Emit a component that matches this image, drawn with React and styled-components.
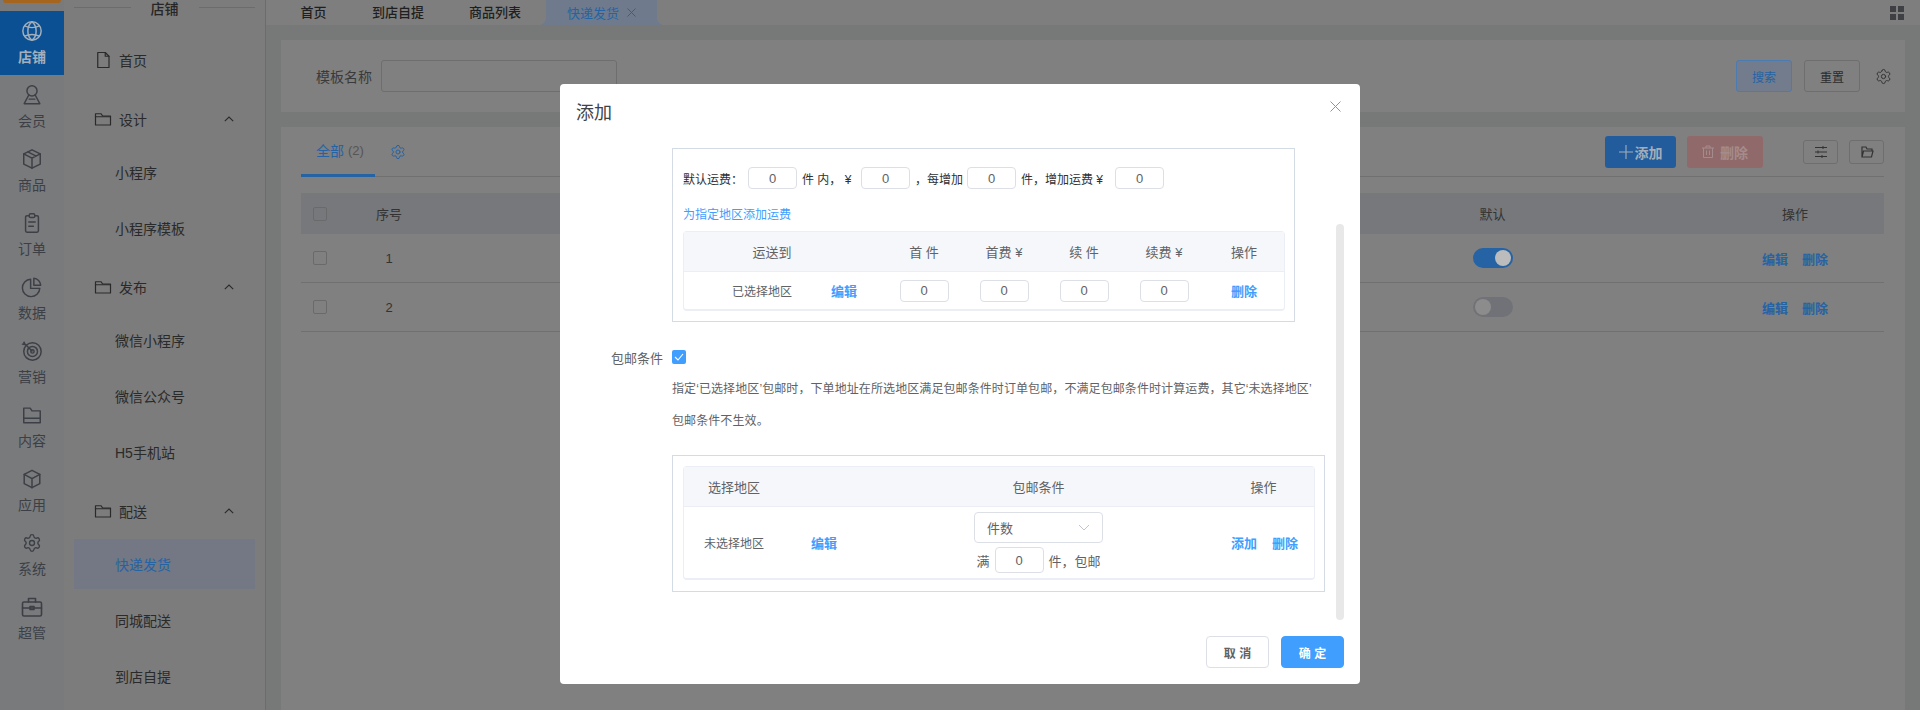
import React from 'react';
import styled, { createGlobalStyle } from 'styled-components';
import { Settings } from 'lucide-react';

const Global = createGlobalStyle`
	html, body { margin: 0; padding: 0; height: 100%; }
	body { font-family: "Liberation Sans", "Noto Sans CJK SC", sans-serif; overflow: hidden; background: #767978; }
	* { box-sizing: border-box; }
`;

// everything behind the dialog is dimmed, so the colours below are the dimmed ones
const dim = {
	text: '#2a2a2a',
	blue: '#2563a5',
	tabBg: '#6f7b8c',
};

const Ic = ({ size = 20, sw = 1.6, children }) => (
	<svg width={size} height={size} viewBox="0 0 24 24" fill="none" stroke="currentColor" strokeWidth={sw} strokeLinecap="round" strokeLinejoin="round">
		{children}
	</svg>
);

const GlobeIcon = () => (
	<Ic size={22}>
		<circle cx="12" cy="12" r="10" />
		<path d="M12 2c-3 2-4.500 5.500-4.500 10s1.500 8 4.500 10c3-2 4.500-5.500 4.500-10S15 4 12 2z" />
		<path d="M4 6.500c2.500 1.200 5 1.800 8 1.800s5.500-.6 8-1.800M4 17.500c2.500-1.200 5-1.800 8-1.800s5.500.6 8 1.800" />
	</Ic>
);
const UserIcon = () => (
	<Ic size={22}>
		<circle cx="12" cy="7.500" r="5.500" />
		<path d="M8.500 12 3.500 21.500h17L15.500 12" />
		<path d="M9 16.500h6" />
	</Ic>
);
const BoxIcon = () => (
	<Ic size={22}>
		<path d="M12 2 21 6.500v11L12 22l-9-4.500v-11z" />
		<path d="M3 6.500 12 11l9-4.500M12 11v11M7.500 4.300l9 4.500" />
	</Ic>
);
const CubeIcon = () => (
	<Ic size={22}>
		<path d="M12 2.500 20.500 7v10L12 21.500 3.500 17V7z" />
		<path d="M3.500 7 12 11.500 20.500 7M12 11.500v10" />
	</Ic>
);
const OrderIcon = () => (
	<Ic size={22}>
		<path d="M9 4H6.500A1.500 1.500 0 0 0 5 5.500v15A1.500 1.500 0 0 0 6.500 22h11a1.500 1.500 0 0 0 1.500-1.500v-15A1.500 1.500 0 0 0 17.500 4H15" />
		<rect x="9" y="2" width="6" height="4" rx="1.500" />
		<path d="M8.500 11h7M8.500 15.500h5" />
	</Ic>
);
const PieIcon = () => (
	<Ic size={22}>
		<path d="M10.500 3.500a9.500 9.500 0 1 0 10 10h-10z" />
		<path d="M14 2.500a8 8 0 0 1 7.500 7.500H14z" />
	</Ic>
);
const AimIcon = () => (
	<Ic size={22}>
		<circle cx="12.500" cy="12.500" r="9.500" />
		<circle cx="12.500" cy="12.500" r="5.500" />
		<circle cx="12.500" cy="12.500" r="1.800" />
		<path d="M12 12 3 3M1.500 4.500 4 5l-.5-2.500" />
	</Ic>
);
const FolderIcon = () => (
	<Ic size={22}>
		<path d="M3 4.500h7l2 3h9v13H3z" />
		<path d="M3 15.500h18" />
	</Ic>
);
const GroupFolder = () => (
	<Ic size={18} sw={1.6}>
		<path d="M2 5h7.500l2 3H22v12H2z" />
		<path d="M2 9h20" />
	</Ic>
);
const CaseIcon = () => (
	<Ic size={24}>
		<rect x="2.500" y="7" width="19" height="14" rx="1.500" />
		<path d="M8.500 7V3.500h7V7M2.500 13h19" />
		<rect x="10" y="11.500" width="4" height="3" />
	</Ic>
);
const PageIcon = () => (
	<Ic size={18} sw={1.6}>
		<path d="M5 2h10l5 5v15H5z" />
		<path d="M15 2v5h5" />
	</Ic>
);
const Chevron = () => (
	<svg width="10" height="6" viewBox="0 0 10 6" fill="none" stroke="currentColor" strokeWidth="1.100">
		<path d="M.8 5.200 5 1l4.200 4.200" />
	</svg>
);

const railItems = [
	{ label: '店铺', icon: <GlobeIcon />, active: true },
	{ label: '会员', icon: <UserIcon /> },
	{ label: '商品', icon: <BoxIcon /> },
	{ label: '订单', icon: <OrderIcon /> },
	{ label: '数据', icon: <PieIcon /> },
	{ label: '营销', icon: <AimIcon /> },
	{ label: '内容', icon: <FolderIcon /> },
	{ label: '应用', icon: <CubeIcon /> },
	{ label: '系统', icon: <Settings size={20} strokeWidth={1.6} /> },
	{ label: '超管', icon: <CaseIcon /> },
];

const menu = [
	{ title: '设计', subs: ['小程序', '小程序模板'] },
	{ title: '发布', subs: ['微信小程序', '微信公众号', 'H5手机站'] },
	{ title: '配送', subs: ['快递发货', '同城配送', '到店自提'], activeSub: '快递发货' },
];

const rows = [
	{ id: 1, on: true },
	{ id: 2, on: false },
];

export default function App() {
	return (
		<Page>
			<Global />
			<Rail>
				<Logo />
				{railItems.map(item => (
					<RailItem key={item.label} $active={item.active}>
						<RailIcon>{item.icon}</RailIcon>
						<span>{item.label}</span>
					</RailItem>
				))}
			</Rail>
			<Side>
				<SideTitle>
					<i />
					<span>店铺</span>
					<i />
				</SideTitle>
				<HomeItem>
					<PageIcon />
					<span>首页</span>
				</HomeItem>
				{menu.map(group => (
					<div key={group.title}>
						<GroupHead>
							<GroupFolder />
							<span>{group.title}</span>
							<ChevronBox>
								<Chevron />
							</ChevronBox>
						</GroupHead>
						{group.subs.map(sub => (
							<SubItem key={sub} $active={sub === group.activeSub}>
								{sub}
							</SubItem>
						))}
					</div>
				))}
			</Side>
			<Main>
				<TopBar>
					<TopTab $w={71}>首页</TopTab>
					<TopTab $w={98}>到店自提</TopTab>
					<TopTab $w={96}>商品列表</TopTab>
					<ActiveTab>
						快递发货
						<TabClose>
							<svg width="9" height="9" viewBox="0 0 9 9" stroke="currentColor" strokeWidth="1">
								<path d="M.5.500l8 8M8.500.500l-8 8" />
							</svg>
						</TabClose>
					</ActiveTab>
					<GridIcon>
						<b />
						<b />
						<b />
						<b />
					</GridIcon>
				</TopBar>
				<Content>
					<SearchCard>
						<SearchLabel>模板名称</SearchLabel>
						<SearchInput />
						<SearchActions>
							<OutlineBtn $primary>搜索</OutlineBtn>
							<OutlineBtn>重置</OutlineBtn>
							<GearBox>
								<Settings size={17} strokeWidth={1.4} />
							</GearBox>
						</SearchActions>
					</SearchCard>
					<ListCard>
						<ListHead>
							<AllTab>
								全部 <em>(2)</em>
							</AllTab>
							<HeadGear>
								<Settings size={16} strokeWidth={1.5} />
							</HeadGear>
							<HeadActions>
								<AddBtn>
									<svg width="14" height="14" viewBox="0 0 14 14" stroke="currentColor" strokeWidth="1.100">
										<path d="M7 0v14M0 7h14" />
									</svg>
									添加
								</AddBtn>
								<DelBtn>
									<svg width="12" height="13" viewBox="0 0 12 13" fill="none" stroke="currentColor">
										<path d="M1.500 3v9.500h9V3M0 3h12M4 3V1h4v2M4.500 5.500v4.500M7.500 5.500v4.500" />
									</svg>
									删除
								</DelBtn>
								<ToolBtn $first>
									<svg width="14" height="14" viewBox="0 0 14 14" fill="none" stroke="currentColor">
										<path d="M1 2.500h12M1 7h12M1 11.500h12M9 1v3M4 5.500v3M8 10v3" />
									</svg>
								</ToolBtn>
								<ToolBtn>
									<svg width="14" height="14" viewBox="0 0 14 14" fill="none" stroke="currentColor" strokeWidth="1.200">
										<path d="M2 12V2h4l1 2h5v2M2 12l1.500-6H13l-1.500 6z" />
									</svg>
								</ToolBtn>
							</HeadActions>
						</ListHead>
						<TableHead>
							<CheckCell>
								<Check />
							</CheckCell>
							<span>序号</span>
							<span />
							<span>默认</span>
							<span />
							<span>操作</span>
						</TableHead>
						{rows.map(row => (
							<TableRow key={row.id}>
								<CheckCell>
									<Check />
								</CheckCell>
								<span>{row.id}</span>
								<span />
								<Toggle $on={row.on} />
								<span />
								<RowActions>
									<a>编辑</a>
									<a>删除</a>
								</RowActions>
							</TableRow>
						))}
					</ListCard>
				</Content>
			</Main>

			<Dialog>
				<DialogHead>
					<DialogTitle>添加</DialogTitle>
					<CloseBtn>
						<svg width="11" height="11" viewBox="0 0 11 11" stroke="currentColor" strokeWidth="1">
							<path d="M.5.500l10 10M10.500.500l-10 10" />
						</svg>
					</CloseBtn>
				</DialogHead>
				<DialogBody>
					<FeeBox>
						<FeeRow>
							<span>默认运费：</span>
							<Num>0</Num>
							<FeeText $w={54}>件 内， ¥</FeeText>
							<Num>0</Num>
							<FeeText $w={47}>，每增加</FeeText>
							<Num>0</Num>
							<FeeText $w={89}>件，增加运费 ¥</FeeText>
							<Num>0</Num>
						</FeeRow>
						<AddLink>为指定地区添加运费</AddLink>
						<FeeTable>
							<FeeHead>
								<FeeHeadFirst>运送到</FeeHeadFirst>
								<span>首 件</span>
								<span>首费 ¥</span>
								<span>续 件</span>
								<span>续费 ¥</span>
								<span>操作</span>
							</FeeHead>
							<FeeCells>
								<RegionCell>已选择地区</RegionCell>
								<DialogLink>编辑</DialogLink>
								<Num>0</Num>
								<Num>0</Num>
								<Num>0</Num>
								<Num>0</Num>
								<DialogLink>删除</DialogLink>
							</FeeCells>
						</FeeTable>
					</FeeBox>
					<FreeRow>
						<FreeLabel>包邮条件</FreeLabel>
						<CheckedBox>
							<svg width="10" height="8" viewBox="0 0 10 8" fill="none" stroke="#fff" strokeWidth="1.100">
								<path d="M1 4l3 3 5-6" />
							</svg>
						</CheckedBox>
					</FreeRow>
					<Note>
						指定‘已选择地区’包邮时，下单地址在所选地区满足包邮条件时订单包邮，不满足包邮条件时计算运费，其它‘未选择地区’
						<br />
						包邮条件不生效。
					</Note>
					<FreeBox>
						<FreeTable>
							<FreeHead>
								<FreeHeadFirst2>选择地区</FreeHeadFirst2>
								<span>包邮条件</span>
								<span>操作</span>
							</FreeHead>
							<FreeCells>
								<FreeRegion>
									<RegionName>未选择地区</RegionName>
									<DialogLink>编辑</DialogLink>
								</FreeRegion>
								<Condition>
									<Select>
										件数
										<svg width="12" height="7" viewBox="0 0 12 7" fill="none" stroke="#c0c4cc" strokeWidth="1">
											<path d="M1 1l5 5 5-5" />
										</svg>
									</Select>
									<ConditionLine>
										<span>满</span>
										<Num $tall>0</Num>
										<span>件，包邮</span>
									</ConditionLine>
								</Condition>
								<FreeOps>
									<DialogLink>添加</DialogLink>
									<DialogLink>删除</DialogLink>
								</FreeOps>
							</FreeCells>
						</FreeTable>
					</FreeBox>
					<ScrollThumb />
				</DialogBody>
				<DialogFoot>
					<CancelBtn>取 消</CancelBtn>
					<OkBtn>确 定</OkBtn>
				</DialogFoot>
			</Dialog>
		</Page>
	);
}

const Page = styled.div`
	display: flex;
	width: 1920px;
	height: 710px;
	overflow: hidden;
	position: relative;
`;

const Rail = styled.div`
	width: 64px;
	flex: none;
	background: #797a7b;
`;

const Logo = styled.div`
	height: 3px;
	margin: 0 3px 8px;
	background: #a5651f;
	border-radius: 0 0 10px 10px;
`;

const RailItem = styled.div`
	height: 64px;
	padding-top: 9px;
	display: flex;
	flex-direction: column;
	align-items: center;
	font-size: 14px;
	line-height: 20px;
	font-weight: ${p => (p.$active ? 700 : 400)};
	background: ${p => (p.$active ? '#0b5092' : 'transparent')};
	color: ${p => (p.$active ? '#a3afbc' : '#3c3f46')};
`;

const RailIcon = styled.div`
	height: 22px;
	margin-bottom: 5px;
	display: flex;
	align-items: center;
	justify-content: center;
	font-weight: 400;
`;

const Side = styled.div`
	width: 202px;
	flex: none;
	padding: 0 10px;
	background: #7c7c7c;
	border-right: 1px solid #6c6c6c;
	color: ${dim.text};
	font-size: 14px;
`;

const SideTitle = styled.div`
	display: flex;
	align-items: center;
	height: 15px;
	font-weight: 500;
	color: #262626;
	i {
		flex: 1;
		height: 1px;
		background: #6c6c6c;
	}
	span {
		width: 68px;
		text-align: center;
	}
`;

const HomeItem = styled.div`
	height: 56px;
	margin: 17px 0 3px;
	padding-left: 20px;
	display: flex;
	align-items: center;
	gap: 7px;
`;

const GroupHead = styled.div`
	height: 56px;
	padding-left: 20px;
	display: flex;
	align-items: center;
	gap: 7px;
`;

const ChevronBox = styled.div`
	margin-left: auto;
	margin-right: 21px;
	display: flex;
`;

const SubItem = styled.div`
	height: 50px;
	margin-bottom: 6px;
	padding-left: 41px;
	display: flex;
	align-items: center;
	background: ${p => (p.$active ? '#737884' : 'transparent')};
	color: ${p => (p.$active ? dim.blue : dim.text)};
`;

const Main = styled.div`
	flex: 1;
	min-width: 0;
	background: #767978;
`;

const TopBar = styled.div`
	height: 25px;
	background: #7e7e7e;
	display: flex;
	align-items: center;
	padding-left: 12px;
	font-size: 13px;
	font-weight: 500;
	color: #1f1f1f;
`;

const TopTab = styled.div`
	width: ${p => p.$w}px;
	text-align: center;
	line-height: 25px;
`;

const ActiveTab = styled.div`
	position: relative;
	margin-left: 3px;
	width: 111px;
	height: 25px;
	padding-left: 21px;
	background: ${dim.tabBg};
	color: ${dim.blue};
	display: flex;
	align-items: center;
	font-weight: 400;
	&::before,
	&::after {
		content: '';
		position: absolute;
		bottom: 0;
		width: 8px;
		height: 8px;
	}
	&::before {
		left: -8px;
		background: radial-gradient(circle at 0 0, transparent 8px, ${dim.tabBg} 8px);
	}
	&::after {
		right: -8px;
		background: radial-gradient(circle at 100% 0, transparent 8px, ${dim.tabBg} 8px);
	}
`;

const TabClose = styled.span`
	margin-left: 8px;
	display: flex;
`;

const GridIcon = styled.div`
	margin-left: auto;
	margin-right: 16px;
	display: grid;
	grid-template-columns: 6px 6px;
	gap: 2px;
	b {
		display: block;
		height: 6px;
		background: #3f4043;
	}
`;

const Content = styled.div`
	padding: 15px 15px 0;
`;

const SearchCard = styled.div`
	height: 72px;
	background: #808080;
	display: flex;
	align-items: center;
	padding: 0 13px 0 35px;
	font-size: 14px;
`;

const SearchLabel = styled.div`
	width: 65px;
	color: #3a3a3a;
`;

const SearchInput = styled.div`
	width: 236px;
	height: 32px;
	border: 1px solid #6e6e6e;
	border-radius: 3px;
`;

const SearchActions = styled.div`
	margin-left: auto;
	display: flex;
	align-items: center;
	gap: 12px;
`;

const OutlineBtn = styled.div`
	width: 56px;
	height: 32px;
	border-radius: 3px;
	font-size: 12px;
	display: flex;
	align-items: center;
	justify-content: center;
	border: 1px solid ${p => (p.$primary ? '#4b7bb0' : '#6e6e6e')};
	background: ${p => (p.$primary ? '#727c8c' : 'transparent')};
	color: ${p => (p.$primary ? dim.blue : '#2c2c2c')};
`;

const GearBox = styled.div`
	margin-left: 3px;
	display: flex;
	color: #333;
`;

const ListCard = styled.div`
	margin-top: 15px;
	height: 600px;
	padding: 0 21px 0 20px;
	background: #808080;
	font-size: 13px;
	color: #333;
`;

const ListHead = styled.div`
	height: 50px;
	display: flex;
	align-items: center;
	border-bottom: 1px solid #707070;
`;

const AllTab = styled.div`
	width: 74px;
	height: 50px;
	padding-left: 15px;
	display: flex;
	align-items: center;
	gap: 4px;
	font-size: 14px;
	color: ${dim.blue};
	border-bottom: 3px solid ${dim.blue};
	em {
		font-style: normal;
		font-size: 13px;
		color: #555;
	}
`;

const HeadGear = styled.div`
	margin-left: 15px;
	display: flex;
	color: ${dim.blue};
`;

const HeadActions = styled.div`
	margin-left: auto;
	display: flex;
	align-items: center;
	gap: 11px;
`;

const AddBtn = styled.div`
	width: 71px;
	height: 32px;
	border-radius: 3px;
	background: #225c9d;
	color: #a3adb9;
	font-size: 14px;
	font-weight: 700;
	display: flex;
	align-items: center;
	justify-content: center;
	gap: 2px;
`;

const DelBtn = styled.div`
	width: 76px;
	height: 32px;
	border-radius: 3px;
	background: #906a6a;
	color: #a58c8c;
	font-size: 14px;
	font-weight: 700;
	display: flex;
	align-items: center;
	justify-content: center;
	gap: 6px;
`;

const ToolBtn = styled.div`
	width: 35px;
	height: 24px;
	margin-left: ${p => (p.$first ? '29px' : '0')};
	border: 1px solid #6e6e6e;
	border-radius: 3px;
	display: flex;
	align-items: center;
	justify-content: center;
	color: #333;
`;

const columns = '40px 96px 1fr 121px 153px 178px';

const TableHead = styled.div`
	margin-top: 16px;
	height: 41px;
	display: grid;
	grid-template-columns: ${columns};
	align-items: center;
	justify-items: center;
	background: #76787b;
`;

const TableRow = styled.div`
	height: 49px;
	display: grid;
	grid-template-columns: ${columns};
	align-items: center;
	justify-items: center;
	border-bottom: 1px solid #707070;
`;

const CheckCell = styled.div`
	justify-self: start;
	padding-left: 12px;
	display: flex;
`;

const Check = styled.div`
	width: 14px;
	height: 14px;
	border: 1px solid #6a6a6a;
	border-radius: 2px;
`;

const Toggle = styled.div`
	position: relative;
	width: 40px;
	height: 20px;
	border-radius: 10px;
	background: ${p => (p.$on ? '#2563a5' : '#707277')};
	&::after {
		content: '';
		position: absolute;
		top: 2px;
		left: ${p => (p.$on ? '22px' : '2px')};
		width: 16px;
		height: 16px;
		border-radius: 50%;
		background: ${p => (p.$on ? '#bcbcbc' : '#8c8c8c')};
	}
`;

const RowActions = styled.div`
	display: flex;
	gap: 14px;
	font-weight: 700;
	color: ${dim.blue};
`;

const Dialog = styled.div`
	position: absolute;
	left: 560px;
	top: 84px;
	width: 800px;
	height: 600px;
	background: #fff;
	border-radius: 4px;
	display: flex;
	flex-direction: column;
	font-size: 12px;
	color: #606266;
`;

const DialogHead = styled.div`
	height: 56px;
	padding: 0 0 2px 16px;
	display: flex;
	align-items: center;
	flex: none;
`;

const DialogTitle = styled.div`
	font-size: 18px;
	color: #404246;
`;

const CloseBtn = styled.div`
	margin-left: auto;
	margin-right: 19px;
	margin-top: -9px;
	display: flex;
	color: #909399;
`;

const DialogBody = styled.div`
	position: relative;
	flex: 1;
	min-height: 0;
	overflow: hidden;
	padding: 8px 0 0 112px;
`;

const FeeBox = styled.div`
	width: 623px;
	height: 174px;
	border: 1px solid #d5dbe5;
	padding: 18px 10px 0;
`;

const FeeRow = styled.div`
	display: flex;
	align-items: center;
	height: 22px;
	gap: 5px;
	color: #303133;
`;

const FeeText = styled.span`
	width: ${p => p.$w}px;
	white-space: nowrap;
`;

const Num = styled.span`
	display: inline-flex;
	align-items: center;
	justify-content: center;
	width: 49px;
	height: ${p => (p.$tall ? '26px' : '22px')};
	border: 1px solid #dcdfe6;
	border-radius: 4px;
	font-size: 13px;
	color: #606266;
	background: #fff;
`;

const AddLink = styled.div`
	margin-top: 16px;
	height: 20px;
	line-height: 20px;
	color: #409eff;
`;

const FeeTable = styled.div`
	margin-top: 6px;
	width: 602px;
	border: 1px solid #ebeef5;
	border-bottom-width: 2px;
	border-radius: 4px;
`;

const FeeHead = styled.div`
	height: 40px;
	display: grid;
	grid-template-columns: 200px repeat(5, 80px);
	align-items: center;
	justify-items: center;
	background: #f5f7fa;
	border-bottom: 1px solid #ebeef5;
	font-size: 13px;
	color: #606266;
`;

const FeeHeadFirst = styled.span`
	padding-right: 24px;
`;

const FeeCells = styled.div`
	height: 37px;
	display: grid;
	grid-template-columns: 120px 80px repeat(5, 80px);
	align-items: center;
	justify-items: center;
`;

const RegionCell = styled.span`
	justify-self: end;
	padding-right: 12px;
`;

const DialogLink = styled.span`
	color: #409eff;
	font-size: 13px;
	font-weight: 700;
`;

const FreeRow = styled.div`
	margin: 28px 0 0 -61px;
	display: flex;
	align-items: center;
	height: 14px;
	gap: 9px;
	font-size: 13px;
`;

const FreeLabel = styled.span`
	width: 52px;
	white-space: nowrap;
`;

const CheckedBox = styled.span`
	width: 14px;
	height: 14px;
	border-radius: 2px;
	background: #409eff;
	display: flex;
	align-items: center;
	justify-content: center;
`;

const Note = styled.div`
	margin-top: 9px;
	line-height: 32px;
	white-space: nowrap;
	letter-spacing: 0.09px;
`;

const FreeBox = styled.div`
	margin-top: 18px;
	width: 653px;
	height: 137px;
	padding: 10px;
	border: 1px solid #d5dbe5;
`;

const FreeTable = styled.div`
	width: 632px;
	border: 1px solid #ebeef5;
	border-bottom-width: 2px;
	border-radius: 4px;
`;

const freeColumns = '180px 349px 101px';

const FreeHead = styled.div`
	height: 40px;
	display: grid;
	grid-template-columns: ${freeColumns};
	align-items: center;
	justify-items: center;
	background: #f5f7fa;
	border-bottom: 1px solid #ebeef5;
	font-size: 13px;
`;

const FreeHeadFirst2 = styled.span`
	justify-self: start;
	padding-left: 24px;
`;

const FreeCells = styled.div`
	height: 71px;
	display: grid;
	grid-template-columns: ${freeColumns};
	align-items: center;
	font-size: 13px;
`;

const FreeRegion = styled.div`
	display: flex;
	align-items: center;
	padding-left: 20px;
	gap: 47px;
`;

const RegionName = styled.span`
	font-size: 12px;
`;

const Condition = styled.div`
	display: flex;
	flex-direction: column;
	align-items: center;
`;

const Select = styled.div`
	width: 129px;
	height: 31px;
	padding: 0 12px;
	border: 1px solid #dcdfe6;
	border-radius: 4px;
	display: flex;
	align-items: center;
	justify-content: space-between;
`;

const ConditionLine = styled.div`
	margin-top: 4px;
	display: flex;
	align-items: center;
	gap: 5px;
`;

const FreeOps = styled.div`
	display: flex;
	padding-left: 18px;
	gap: 15px;
`;

const ScrollThumb = styled.div`
	position: absolute;
	right: 16px;
	top: 84px;
	bottom: 0;
	width: 8px;
	border-radius: 4px;
	background: #e8e8e8;
`;

const DialogFoot = styled.div`
	height: 64px;
	flex: none;
	padding: 16px 16px 0 0;
	display: flex;
	justify-content: flex-end;
	gap: 12px;
`;

const CancelBtn = styled.div`
	width: 63px;
	height: 32px;
	border: 1px solid #dcdfe6;
	border-radius: 4px;
	display: flex;
	align-items: center;
	justify-content: center;
	font-weight: 700;
	color: #606266;
`;

const OkBtn = styled(CancelBtn)`
	border-color: #409eff;
	background: #409eff;
	color: #fff;
`;
